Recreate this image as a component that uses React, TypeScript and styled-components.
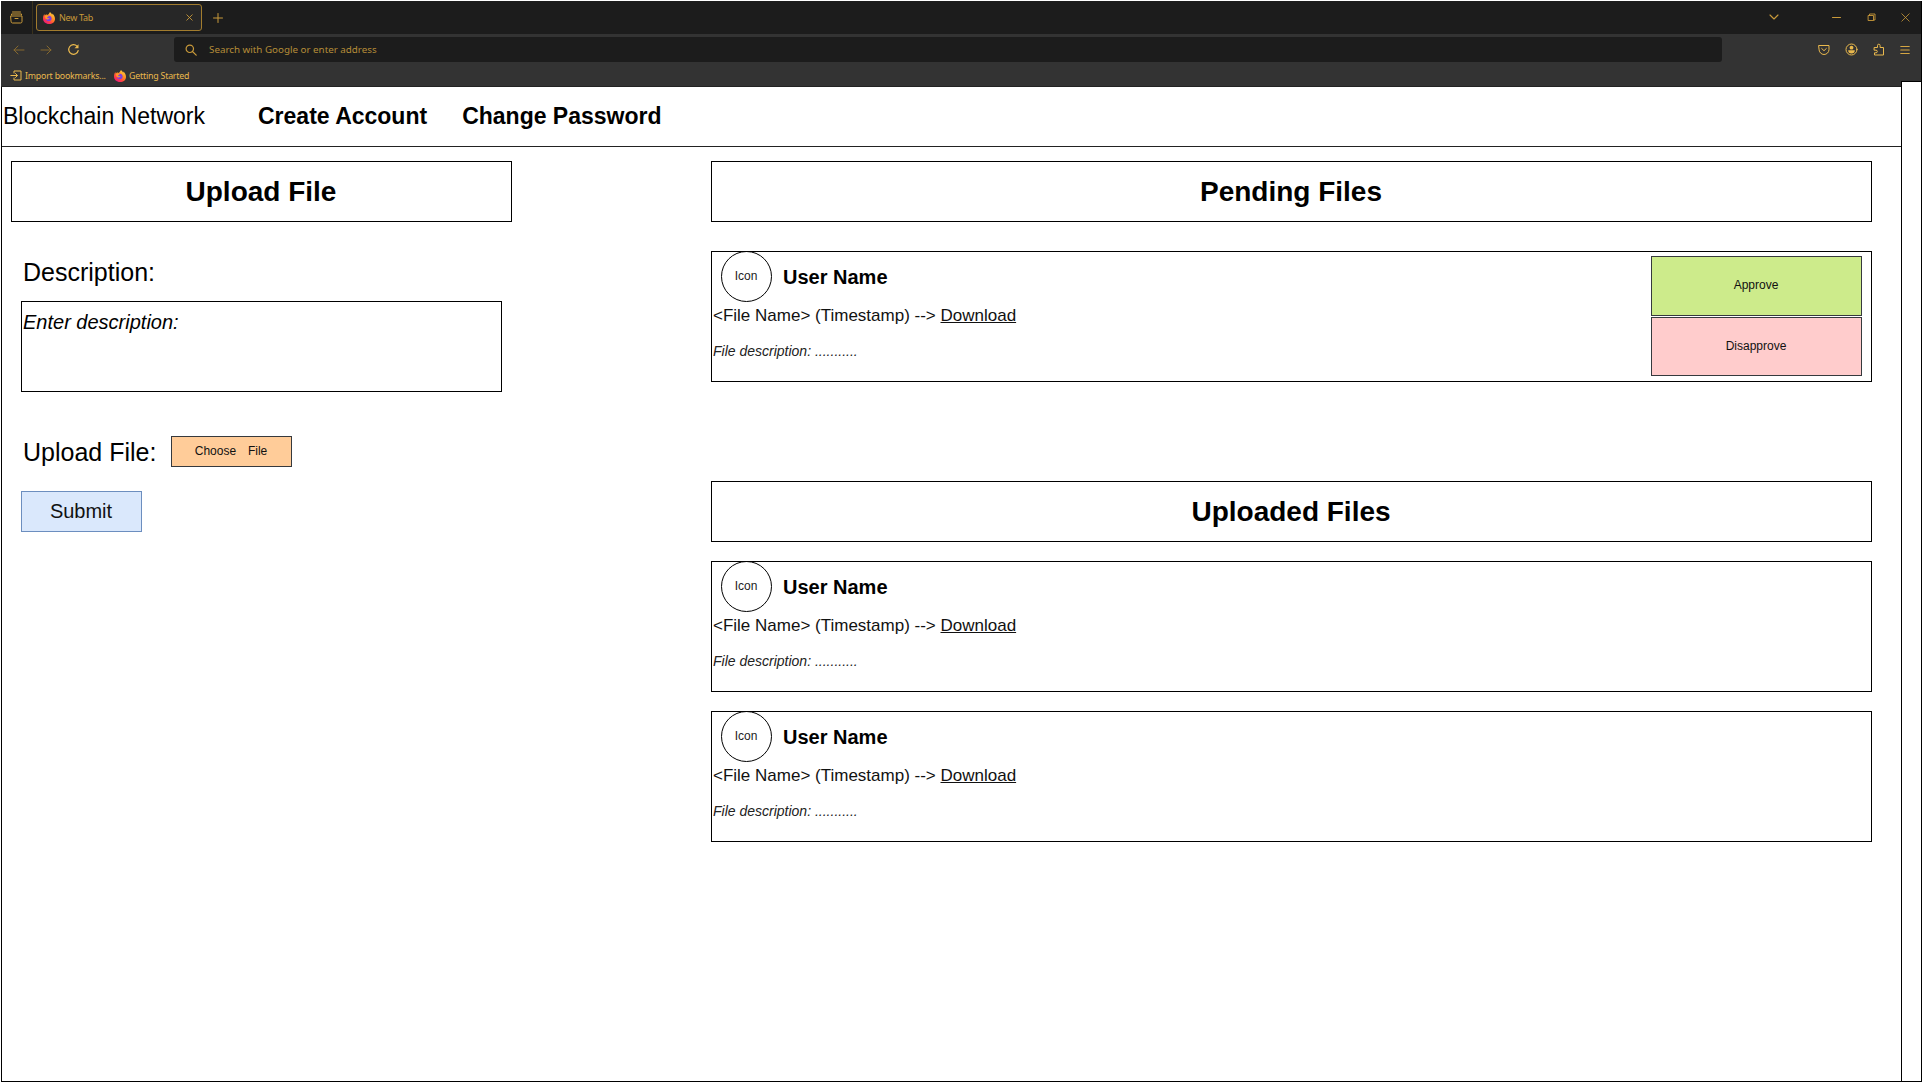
import React from "react";
import styled, { createGlobalStyle } from "styled-components";

const GlobalStyle = createGlobalStyle`
  * { box-sizing: border-box; }
  body { margin: 0; background: #fff; }
`;

const sans = `"Liberation Sans", Arial, sans-serif`;
const ui = `"Noto Sans", "Open Sans", sans-serif`;
const gold = "#c99a3a";
const bright = "#eab94d";
const dim = "#86692f";

const Page = styled.div`
  width: 1923px;
  height: 1083px;
  padding: 1px;
  font-family: ${sans};
  color: #000;
  overflow: hidden;
`;
const Window = styled.div`
  position: relative;
  width: 1921px;
  height: 1081px;
  border: 1px solid #000;
  border-top: 0;
  background: #fff;
`;

/* Browser chrome */
const Chrome = styled.header`
  margin: 0 0 0 -1px;
  width: 1920px;
  height: 86px;
  background: #333;
  font-family: ${ui};
  border-bottom: 1px solid #222;
`;
const TabBar = styled.div`
  height: 33px;
  display: flex;
  align-items: center;
  background: #1c1c1c;
  padding: 0 11px 0 9px;
`;
const TabDivider = styled.i`
  width: 1px;
  height: 33px;
  background: #3a321d;
  margin: 0 3px 0 9px;
`;
const Tab = styled.div`
  width: 166px;
  height: 27px;
  display: flex;
  align-items: center;
  border: 1px solid #a27c2e;
  border-radius: 3px;
  background: #272727;
  padding: 0 8px 0 6px;
  margin-right: 11px;
`;
const TabTitle = styled.span`
  flex: 1;
  padding-left: 4px;
  font-size: 9px;
  line-height: 12px;
  letter-spacing: -0.3px;
  color: ${gold};
`;
const WindowButtons = styled.div`
  margin-left: auto;
  display: flex;
  align-items: center;
`;
const NavBar = styled.div`
  height: 31px;
  display: flex;
  align-items: center;
  padding: 0 11px;
`;
const UrlBar = styled.div`
  width: 1548px;
  height: 25px;
  margin-left: 94px;
  display: flex;
  align-items: center;
  background: #1c1c1c;
  border-radius: 3px;
  padding-left: 11px;
  gap: 12px;
  font-size: 9.8px;
  color: #b58c38;
`;
const NavActions = styled.div`
  margin-left: auto;
  display: flex;
  align-items: center;
  gap: 15px;
`;
const Bookmarks = styled.div`
  height: 21px;
  display: flex;
  align-items: center;
  padding: 0 0 0 9px;
  font-size: 8.8px;
  line-height: 12px;
  letter-spacing: -0.2px;
  color: ${bright};
`;
const BookmarkLabel = styled.span<{ $w: number }>`
  width: ${(p) => p.$w}px;
  margin-left: 3px;
  white-space: nowrap;
`;
const Glyph = styled.svg<{ $color?: string; $ml?: number }>`
  display: block;
  flex: none;
  margin-left: ${(p) => p.$ml ?? 0}px;
  fill: none;
  stroke: ${(p) => p.$color ?? gold};
  stroke-linecap: round;
  stroke-linejoin: round;
`;

/* Site header */
const SiteNav = styled.nav`
  width: 1899px;
  height: 60px;
  display: flex;
  align-items: center;
  border-bottom: 1px solid #222;
  padding: 0 0 2px 1px;
  font-size: 23px;
  line-height: 28px;
  white-space: nowrap;
`;
const Brand = styled.div`
  width: 255px;
`;
const NavLink = styled.b`
  margin-right: 35px;
`;
const ScrollTrack = styled.div`
  position: absolute;
  top: 80px;
  right: -1px;
  bottom: -1px;
  width: 21px;
  border: 1px solid #000;
  background: #fff;
`;

/* Content */
const Content = styled.main`
  display: flex;
  align-items: flex-start;
  padding: 14px 0 0 9px;
`;
const LeftColumn = styled.section`
  width: 501px;
  margin-right: 199px;
`;
const RightColumn = styled.section`
  width: 1161px;
`;
const Title = styled.h1`
  height: 61px;
  margin: 0;
  display: flex;
  align-items: center;
  justify-content: center;
  border: 1px solid #000;
  padding-right: 1px;
  font-size: 28px;
  line-height: 32px;
`;
const Form = styled.div`
  padding: 33px 10px 0;
`;
const Label = styled.div`
  font-size: 25px;
  line-height: 34px;
  padding-left: 2px;
  white-space: nowrap;
`;
const TextArea = styled.div`
  width: 481px;
  height: 91px;
  margin-top: 12px;
  border: 1px solid #000;
  padding: 9px 1px;
  font-size: 20px;
  line-height: 23px;
  font-style: italic;
`;
const FileRow = styled.div`
  height: 31px;
  margin-top: 44px;
  display: flex;
  align-items: center;
`;
const FileLabel = styled(Label)`
  width: 150px;
`;
const Button = styled.button<{ $bg: string; $line: string; $w: number; $h: number; $size?: number; $pb?: number }>`
  width: ${(p) => p.$w}px;
  height: ${(p) => p.$h}px;
  padding: 0 1px ${(p) => p.$pb ?? 2}px 0;
  border: 1px solid ${(p) => p.$line};
  background: ${(p) => p.$bg};
  font-family: ${sans};
  font-size: ${(p) => p.$size ?? 12}px;
  word-spacing: 0.6px;
  color: #111;
  white-space: pre;
`;
const SubmitRow = styled.div`
  margin-top: 24px;
`;
const Card = styled.article<{ $mt: number }>`
  height: 131px;
  margin-top: ${(p) => p.$mt}px;
  border: 1px solid #000;
  display: flex;
  justify-content: space-between;
`;
const CardBody = styled.div`
  padding-left: 1px;
`;
const UserRow = styled.div`
  display: flex;
  align-items: center;
  height: 51px;
  margin-top: -1px;
  padding-left: 8px;
`;
const Avatar = styled.div`
  width: 51px;
  height: 51px;
  border: 1px solid #000;
  border-radius: 50%;
  display: flex;
  align-items: center;
  justify-content: center;
  padding: 0 1px 1px 0;
  font-size: 12px;
  color: #222;
  margin-right: 11px;
`;
const UserName = styled.b`
  padding-top: 1px;
  font-size: 20px;
  line-height: 24px;
`;
const FileLine = styled.div`
  margin-top: 4px;
  font-size: 17px;
  line-height: 20px;
  color: #111;
`;
const FileDescription = styled.div`
  margin-top: 17px;
  font-size: 14px;
  line-height: 16px;
  font-style: italic;
  color: #222;
`;
const Actions = styled.div`
  display: flex;
  flex-direction: column;
  gap: 1px;
  padding: 4px 9px 0 0;
`;
const Section = styled.div<{ $mt: number }>`
  margin-top: ${(p) => p.$mt}px;
`;

const Firefox = ({ size = 12 }: { size?: number }) => (
  <svg width={size} height={size} viewBox="0 0 24 24">
    <defs>
      <linearGradient id="fx" x1="0.9" y1="0" x2="0.2" y2="1">
        <stop offset="0" stopColor="#ffe14a" />
        <stop offset="0.45" stopColor="#ff8a1f" />
        <stop offset="0.75" stopColor="#ff3b47" />
        <stop offset="1" stopColor="#e3128a" />
      </linearGradient>
    </defs>
    <path fill="url(#fx)" d="M14 0c2 2 3 3 4 5 1 0 1-1 1-2 3 3 5 7 5 11 0 6-5 10-12 10S0 19 0 13c0-4 1-7 3-9v3l3-2c1 0 2 0 3 1 2-1 3-3 5-6z" />
    <circle cx="11.5" cy="13" r="5.6" fill="#7a3fe0" />
    <path fill="#ff9a26" d="M4 8c3-2 6-1 8 1-2 0-3 1-4 2 1 2 3 2 5 1 0 3-5 4-8 1z" />
  </svg>
);

const FileCard = ({ mt, pending }: { mt: number; pending?: boolean }) => (
  <Card $mt={mt}>
    <CardBody>
      <UserRow>
        <Avatar>Icon</Avatar>
        <UserName>User Name</UserName>
      </UserRow>
      <FileLine>
        &lt;File Name&gt; (Timestamp) --&gt; <u>Download</u>
      </FileLine>
      <FileDescription>File description: ...........</FileDescription>
    </CardBody>
    {pending && (
      <Actions>
        <Button $bg="#cdeb8b" $line="#36393d" $w={211} $h={60}>Approve</Button>
        <Button $bg="#ffcccc" $line="#36393d" $w={211} $h={59}>Disapprove</Button>
      </Actions>
    )}
  </Card>
);

export default function App() {
  return (
    <Page>
      <GlobalStyle />
      <Window>
        <Chrome>
          <TabBar>
            <Glyph width="13" height="13" viewBox="0 0 13 13">
              <path d="M2.5 1h8M1.5 4V3h10v1M1 5h11v5.500a1.500 1.500 0 0 1-1.500 1.500h-8A1.500 1.500 0 0 1 1 10.500zM5 7.500h3" />
            </Glyph>
            <TabDivider />
            <Tab>
              <Firefox />
              <TabTitle>New Tab</TabTitle>
              <Glyph width="7" height="7" viewBox="0 0 7 7"><path d="M.8.8l5.400 5.400M6.200.8L.8 6.200" strokeWidth=".9" /></Glyph>
            </Tab>
            <Glyph width="10" height="10" viewBox="0 0 10 10"><path d="M5 .5v9M.5 5h9" /></Glyph>
            <WindowButtons>
              <Glyph width="10" height="7" viewBox="0 0 10 7"><path d="M1 1l4 4 4-4" strokeWidth="1.100" /></Glyph>
              <Glyph $ml={53} width="9" height="9" viewBox="0 0 9 9"><path d="M.5 4.500h8" /></Glyph>
              <Glyph $ml={26} width="9" height="9" viewBox="0 0 9 9"><path d="M1.500 2.500h5v5h-5zM2.500 2.500v-1.500H8v6H6.500" strokeWidth=".9" /></Glyph>
              <Glyph $ml={25} width="9" height="9" viewBox="0 0 9 9"><path d="M.8.8l7.400 7.400M8.200.8L.8 8.200" strokeWidth=".8" /></Glyph>
            </WindowButtons>
          </TabBar>
          <NavBar>
            <Glyph $color={dim} $ml={1} width="12" height="10" viewBox="0 0 12 10"><path d="M11 5H1M5 1L1 5l4 4" /></Glyph>
            <Glyph $color={dim} $ml={15} width="12" height="10" viewBox="0 0 12 10"><path d="M1 5h10M7 1l4 4-4 4" /></Glyph>
            <Glyph $color={bright} $ml={15} width="13" height="13" viewBox="0 0 13 13">
              <path d="M10 3.200A4.800 4.800 0 1 0 11.200 7.500" strokeWidth="1.200" />
              <path d="M11.500 1.200v4H7.500z" fill={bright} stroke="none" />
            </Glyph>
            <UrlBar>
              <Glyph width="12" height="12" viewBox="0 0 12 12"><path d="M8.500 4.800a3.700 3.700 0 1 1-7.400 0 3.700 3.700 0 0 1 7.400 0zM7.500 7.500l3.700 3.700" strokeWidth="1.200" /></Glyph>
              Search with Google or enter address
            </UrlBar>
            <NavActions>
              <Glyph $color={bright} width="12" height="12" viewBox="0 0 12 12"><path d="M1 1.500h10V5.500a5 5 0 0 1-10 0zM3.700 4.500L6 6.700l2.300-2.200" /></Glyph>
              <Glyph $color={bright} width="13" height="13" viewBox="0 0 13 13">
                <circle cx="6.500" cy="6.500" r="5.500" />
                <circle cx="6.500" cy="4.700" r="1.900" fill={bright} stroke="none" />
                <path d="M3.200 7.300h6.600a3.300 3.300 0 0 1-6.600 0z" fill={bright} stroke="none" />
              </Glyph>
              <Glyph $color={bright} width="12" height="13" viewBox="0 0 12 13"><path d="M1.500 4.500h3V2.500a1.300 1.300 0 0 1 2.600 0v2h3.400v7.500h-9V9.800h1.500a1.200 1.200 0 0 0 0-2.600H1.500z" /></Glyph>
              <Glyph $color="#d5a642" width="10" height="10" viewBox="0 0 10 10"><path d="M.8 1.500h8.400M.8 5h8.400M.8 8.500h8.400" strokeWidth="1.200" /></Glyph>
            </NavActions>
          </NavBar>
          <Bookmarks>
            <Glyph $color={bright} width="12" height="11" viewBox="0 0 12 11"><path d="M4 3V1h7v9H4V8M.8 5.500h6.400M5.500 3.500l2 2-2 2" /></Glyph>
            <BookmarkLabel $w={89}>Import bookmarks...</BookmarkLabel>
            <Firefox />
            <BookmarkLabel $w={70}>Getting Started</BookmarkLabel>
          </Bookmarks>
        </Chrome>
        <SiteNav>
          <Brand>Blockchain Network</Brand>
          <NavLink>Create Account</NavLink>
          <NavLink>Change Password</NavLink>
        </SiteNav>
        <Content>
          <LeftColumn>
            <Title>Upload File</Title>
            <Form>
              <Label>Description:</Label>
              <TextArea>Enter description:</TextArea>
              <FileRow>
                <FileLabel>Upload File:</FileLabel>
                <Button $bg="#ffcc99" $line="#36393d" $w={121} $h={31}>{"Choose   File"}</Button>
              </FileRow>
              <SubmitRow>
                <Button $bg="#dae8fc" $line="#6c8ebf" $w={121} $h={41} $size={20} $pb={0}>Submit</Button>
              </SubmitRow>
            </Form>
          </LeftColumn>
          <RightColumn>
            <Title>Pending Files</Title>
            <FileCard mt={29} pending />
            <Section $mt={99}>
              <Title>Uploaded Files</Title>
              <FileCard mt={19} />
              <FileCard mt={19} />
            </Section>
          </RightColumn>
        </Content>
        <ScrollTrack />
      </Window>
    </Page>
  );
}
